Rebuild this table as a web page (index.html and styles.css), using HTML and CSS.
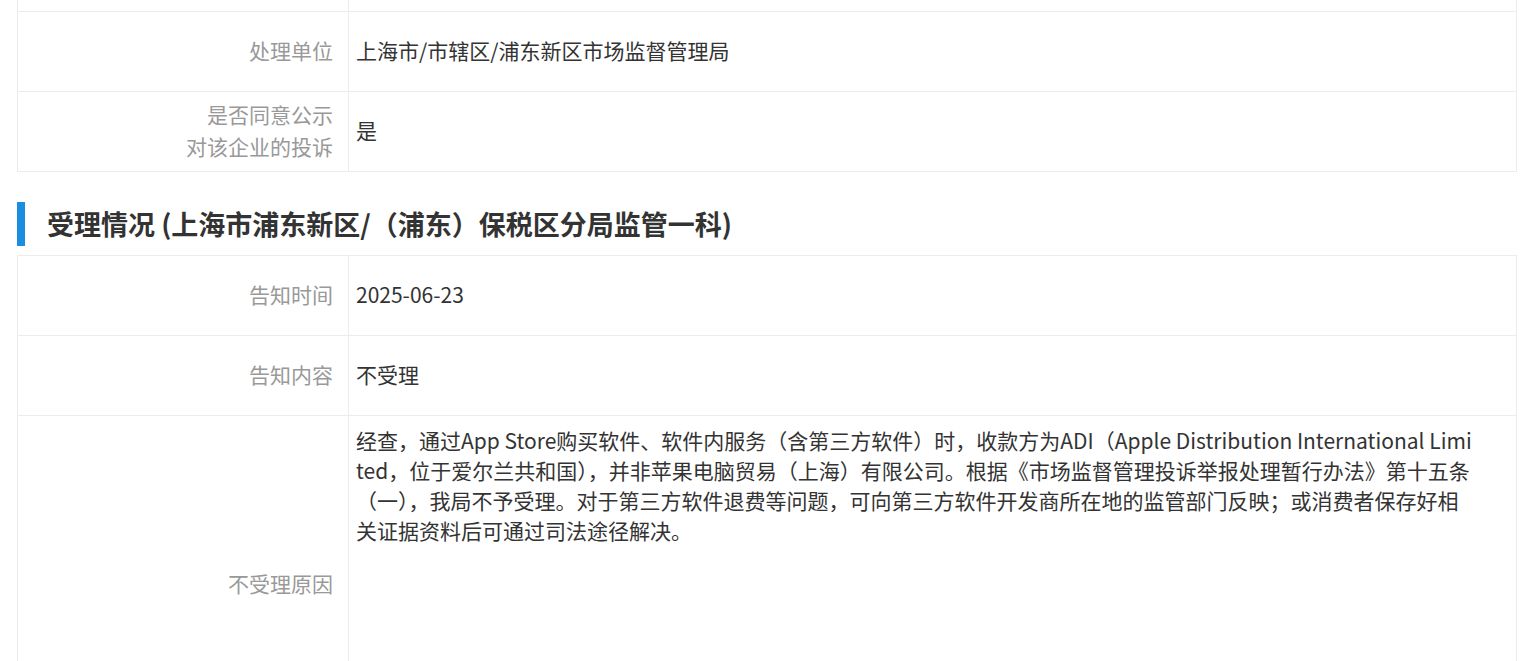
FILE: index.html
```html
<!DOCTYPE html>
<html lang="zh-CN">
<head>
	<meta charset="UTF-8">
	<title>投诉详情</title>
	<link rel="stylesheet" href="styles.css">
</head>
<body>
	<div class="page">
		<div class="info">
			<div class="row">
				<div class="label"></div>
				<div class="value"></div>
			</div>
			<div class="row">
				<div class="label">处理单位</div>
				<div class="value">上海市/市辖区/浦东新区市场监督管理局</div>
			</div>
			<div class="row">
				<div class="label">是否同意公示<br>对该企业的投诉</div>
				<div class="value">是</div>
			</div>
		</div>

		<h2 class="sec-title">受理情况 (上海市浦东新区/（浦东）保税区分局监管一科)</h2>

		<div class="info">
			<div class="row">
				<div class="label">告知时间</div>
				<div class="value">2025-06-23</div>
			</div>
			<div class="row">
				<div class="label">告知内容</div>
				<div class="value">不受理</div>
			</div>
			<div class="row row-long">
				<div class="label">不受理原因</div>
				<div class="value">经查，通过App Store购买软件、软件内服务（含第三方软件）时，收款方为ADI（Apple Distribution International Limited，位于爱尔兰共和国），并非苹果电脑贸易（上海）有限公司。根据《市场监督管理投诉举报处理暂行办法》第十五条（一），我局不予受理。对于第三方软件退费等问题，可向第三方软件开发商所在地的监管部门反映；或消费者保存好相关证据资料后可通过司法途径解决。</div>
			</div>
		</div>
	</div>
</body>
</html>
```

FILE: styles.css
```css
body,div,h2{
	margin:0;
	padding:0;
}
body{
	background:#fff;
	color:#333;
	font:400 21px/30px "Noto Sans CJK SC","Noto Sans",sans-serif;
}
.page{
	margin-top:-69px;
	padding-left:17px;
}
.info{
	width:1500px;
	box-sizing:border-box;
	border:1px solid #ececec;
	border-bottom:0;
}
.row{
	display:grid;
	grid-template-columns:331px 1fr;
	min-height:79px;
	border-bottom:1px solid #ececec;
}
.label{
	display:flex;
	align-items:center;
	justify-content:flex-end;
	text-align:right;
	padding:0 15px 3px 0;
	border-right:1px solid #ececec;
	color:#999;
	line-height:32px;
}
.value{
	display:flex;
	align-items:center;
	padding:7px 40px 11px 7px;
	word-break:break-all;
}
.row-long{
	min-height:337px;
}
.row-long .value{
	display:block;
	padding-top:9px;
}
.sec-title{
	margin:30px 0 9px;
	padding-left:22px;
	border-left:8px solid #1b8de0;
	font:700 27px/44px "Noto Sans CJK SC","Noto Sans",sans-serif;
	color:#333;
}
```
